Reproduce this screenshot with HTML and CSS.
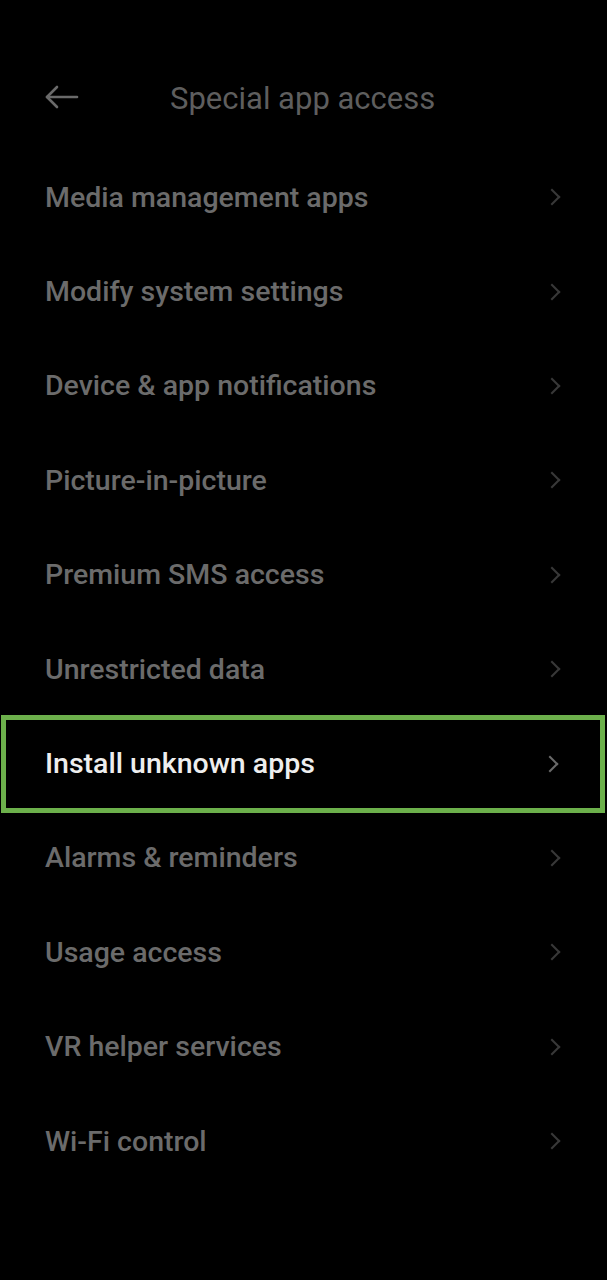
FILE: index.html
```html
<!DOCTYPE html>
<html lang="en">

<head>
    <meta charset="UTF-8">
    <meta name="viewport" content="width=device-width, initial-scale=1.0">
    <title>Special app access</title>
    <link rel="stylesheet" href="styles.css">
</head>

<body>
    <div class="screen">
        <div class="header">
            <button class="back">
                <svg width="34" height="24" viewBox="0 0 34 24" fill="none" stroke="#6a6a6a" stroke-width="2.6" stroke-linecap="round" stroke-linejoin="round">
                    <path d="M2 12 H32"/>
                    <path d="M12 2 L2 12 L12 22"/>
                </svg>
            </button>
            <h1 class="title">Special app access</h1>
        </div>

        <ul class="list">
            <li class="item"><span>Media management apps</span><i class="chev"></i></li>
            <li class="item"><span>Modify system settings</span><i class="chev"></i></li>
            <li class="item"><span>Device &amp; app notifications</span><i class="chev"></i></li>
            <li class="item"><span>Picture-in-picture</span><i class="chev"></i></li>
            <li class="item"><span>Premium SMS access</span><i class="chev"></i></li>
            <li class="item"><span>Unrestricted data</span><i class="chev"></i></li>
            <li class="item active"><span>Install unknown apps</span><i class="chev"></i></li>
            <li class="item"><span>Alarms &amp; reminders</span><i class="chev"></i></li>
            <li class="item"><span>Usage access</span><i class="chev"></i></li>
            <li class="item"><span>VR helper services</span><i class="chev"></i></li>
            <li class="item"><span>Wi-Fi control</span><i class="chev"></i></li>
        </ul>
    </div>
</body>

</html>
```

FILE: styles.css
```css
* {
    margin: 0;
    padding: 0;
    box-sizing: border-box;
    font-family: Roboto, 'Noto Sans', sans-serif;
}

body {
    background-color: #000;
    width: 607px;
    height: 1280px;
    overflow: hidden;
}

.header {
    display: flex;
    align-items: center;
    height: 104px;
    margin-top: 46px;
    padding-left: 45px;
}

.back {
    border: 0;
    outline: 0;
    background: none;
    width: 34px;
    height: 24px;
    display: flex;
    margin-top: -2px;
}

.title {
    font-size: 31px;
    font-weight: 400;
    color: #5e5e5e;
    margin-left: 91px;
}

.list {
    list-style: none;
}

.item {
    display: flex;
    align-items: center;
    justify-content: space-between;
    height: 94.4px;
    padding: 0 45px;
    font-size: 28.5px;
    font-weight: 500;
    color: #6b6b6b;
}

.item.active {
    color: #eeeeee;
    border: 5px solid #6cb04b;
    margin: 0 2px 0 1px;
    height: 98px;
    margin-top: -1.6px;
    margin-bottom: -2px;
    padding: 0 40px 0 39px;
}

.chev {
    width: 12px;
    height: 12px;
    border-top: 2px solid #383838;
    border-right: 2px solid #383838;
    transform: rotate(45deg);
    margin-right: 4px;
}

.active .chev {
    border-color: #6a6a6a;
}
```
